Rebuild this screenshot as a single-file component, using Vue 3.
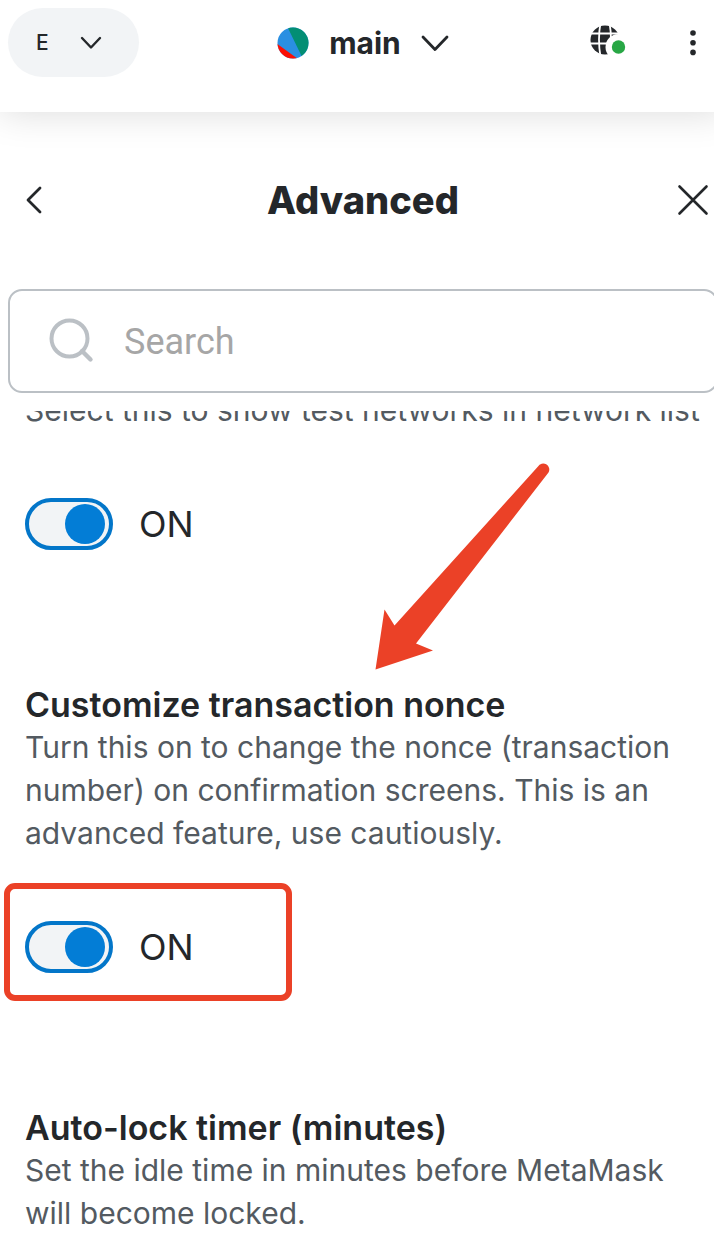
<template>
  <div class="viewport">
    <div class="wallet">
      <header class="app-header">
        <div class="header-side">
          <button class="network-button" type="button" aria-label="Select network">
            <span>E</span>
            <svg width="24" height="24" viewBox="0 0 24 24" fill="none">
              <path d="M3 7L12 16.5L21 7" stroke="#24272a" stroke-width="2.4" stroke-linecap="round" stroke-linejoin="round" />
            </svg>
          </button>
        </div>

        <button class="account-button" type="button">
          <svg class="avatar" width="32" height="32" viewBox="0 0 32 32">
            <clipPath id="avatar-clip"><circle cx="16" cy="16" r="15.5" /></clipPath>
            <g clip-path="url(#avatar-clip)">
              <rect width="32" height="32" fill="#2a8fe2" />
              <path d="M10 -1L26 32H33V-1Z" fill="#038e74" />
              <path d="M-2 15.2L21 32H-2Z" fill="#fb1004" />
            </g>
          </svg>
          <span>main</span>
          <svg width="28" height="28" viewBox="0 0 28 28" fill="none">
            <path d="M2 8L14 20.5L26 8" stroke="#24272a" stroke-width="2.8" stroke-linecap="round" stroke-linejoin="round" />
          </svg>
        </button>

        <div class="header-side header-actions">
          <button class="icon-button" type="button" aria-label="Connected sites">
            <svg width="40" height="40" viewBox="0 0 40 40">
              <circle cx="18" cy="17" r="14.5" fill="#24272a" />
              <path
                d="M2 10.5H34M2 20.5H34M13.5 0Q10.5 16 13.5 34M22.5 0Q25.5 16 22.5 34"
                stroke="#fff"
                stroke-width="1.8"
                fill="none"
              />
              <circle cx="31.5" cy="24" r="13" fill="#fff" />
              <circle cx="31.5" cy="24" r="6.7" fill="#28a745" />
            </svg>
          </button>
          <button class="icon-button" type="button" aria-label="Menu">
            <svg width="24" height="40" viewBox="0 0 24 40" fill="#24272a">
              <circle cx="12" cy="10" r="2.8" />
              <circle cx="12" cy="19.7" r="2.8" />
              <circle cx="12" cy="29.4" r="2.8" />
            </svg>
          </button>
        </div>
      </header>

      <main>
        <div class="title-bar">
          <button class="icon-button" type="button" aria-label="Back">
            <svg width="32" height="32" viewBox="0 0 32 32" fill="none">
              <path d="M23 4L11 16L23 28" stroke="#24272a" stroke-width="2.8" stroke-linecap="round" stroke-linejoin="round" />
            </svg>
          </button>
          <h1>Advanced</h1>
          <button class="icon-button" type="button" aria-label="Close">
            <svg width="32" height="32" viewBox="0 0 32 32" fill="none">
              <path d="M2.500 2.500L29.500 29.500M29.500 2.500L2.500 29.500" stroke="#24272a" stroke-width="2.600" stroke-linecap="round" />
            </svg>
          </button>
        </div>

        <label class="search">
          <svg width="48" height="48" viewBox="0 0 48 48" fill="none" stroke="#bbc0c5">
            <circle cx="22.5" cy="21.5" r="18" stroke-width="4" />
            <path d="M35 34L43.5 42.5" stroke-width="4.4" stroke-linecap="round" />
          </svg>
          <input v-model="query" type="search" placeholder="Search" aria-label="Search settings" />
        </label>

        <div class="settings">
          <section v-for="item in settings" :key="item.id" class="setting">
            <h2 v-if="item.title">{{ item.title }}</h2>
            <p>{{ item.description }}</p>
            <label v-if="item.toggle" class="toggle-row" :class="{ highlighted: item.highlighted }">
              <input v-model="item.on" type="checkbox" role="switch" />
              <span>{{ item.on ? 'ON' : 'OFF' }}</span>
            </label>
          </section>

          <svg class="pointer" width="176" height="210" viewBox="0 0 176 210">
            <path
              d="M163 4.5A6 6 0 0 1 173.5 10.5L41 181.5L58 188.5L0.5 207.5L9.5 147.5L19.5 163.5Z"
              fill="#eb4127"
            />
          </svg>
        </div>
      </main>
    </div>
  </div>
</template>

<script setup>
import { ref } from 'vue'

const query = ref('')

const settings = ref([
  {
    id: 'test-networks',
    description: 'Select this to show test networks in network list',
    toggle: true,
    on: true
  },
  {
    id: 'nonce',
    title: 'Customize transaction nonce',
    description:
      'Turn this on to change the nonce (transaction number) on confirmation screens. This is an advanced feature, use cautiously.',
    toggle: true,
    on: true,
    highlighted: true
  },
  {
    id: 'auto-lock',
    title: 'Auto-lock timer (minutes)',
    description: 'Set the idle time in minutes before MetaMask will become locked.'
  }
])
</script>

<style>
body {
  margin: 0;
  background: #fff;
}
</style>

<style scoped>
.viewport {
  overflow: hidden;
}

/* the panel runs slightly past the right edge of the window */
.wallet {
  width: calc(100% + 12px);
  font-family: Inter, 'Liberation Sans', sans-serif;
  color: #24272a;
}

button {
  display: flex;
  align-items: center;
  padding: 0;
  border: none;
  background: none;
  color: inherit;
  font-family: inherit;
  cursor: pointer;
}

.app-header {
  display: grid;
  grid-template-columns: 1fr auto 1fr;
  align-items: center;
  padding: 8px 8px 35px;
  box-shadow: 0 0 36px rgba(0, 0, 0, 0.15);
}

.header-side {
  display: flex;
  align-items: center;
}

.header-actions {
  justify-content: flex-end;
  gap: 54px;
  padding-right: 13px;
}

.network-button {
  gap: 30px;
  height: 69px;
  padding: 0 36px 0 28px;
  border-radius: 35px;
  background: #f2f4f6;
  font-size: 21px;
  font-weight: 500;
}

.account-button {
  gap: 20px;
  font-size: 30px;
  font-weight: 700;
}

.title-bar {
  display: flex;
  align-items: center;
  justify-content: space-between;
  padding: 64px 17px 65px;
}

h1 {
  margin: 0;
  font-size: 38px;
  line-height: 48px;
  font-weight: 800;
}

.search {
  display: flex;
  align-items: center;
  gap: 29px;
  height: 100px;
  margin: 0 8px;
  padding: 0 37px;
  border: 2px solid #bbc0c5;
  border-radius: 14px;
}

.search input {
  flex: 1;
  min-width: 0;
  padding: 2px 0 0;
  border: none;
  outline: none;
  background: none;
  font-family: Roboto, sans-serif;
  font-size: 36px;
  color: #24272a;
}

.search input::placeholder {
  color: #a6a6a6;
  opacity: 1;
}

/* scrolled list: its first line is half hidden under the search box */
.settings {
  position: relative;
  margin-top: 18px;
  padding: 0 25px;
  overflow: hidden;
}

.setting + .setting {
  margin-top: 133px;
}

.setting:first-child {
  margin-top: -22px;
}

h2 {
  margin: 0;
  font-size: 34px;
  line-height: 43px;
  font-weight: 600;
}

p {
  margin: 0;
  font-size: 30px;
  line-height: 43px;
  color: #535a61;
}

.toggle-row {
  position: relative;
  display: flex;
  align-items: center;
  gap: 26px;
  width: fit-content;
  margin-top: 66px;
  font-size: 36px;
  line-height: 52px;
  cursor: pointer;
}

.toggle-row input {
  display: flex;
  align-items: center;
  box-sizing: border-box;
  appearance: none;
  width: 88px;
  height: 52px;
  margin: 0;
  padding: 0 4px;
  border: 4px solid #0376c9;
  border-radius: 26px;
  background: #f2f4f6;
}

.toggle-row input::before {
  content: '';
  width: 40px;
  height: 40px;
  border-radius: 50%;
  background: #6a737d;
}

.toggle-row input:checked {
  justify-content: flex-end;
}

.toggle-row input:checked::before {
  background: #037dd6;
}

.highlighted::after {
  content: '';
  position: absolute;
  top: -38px;
  left: -21px;
  box-sizing: border-box;
  width: 288px;
  height: 118px;
  border: 6px solid #eb4127;
  border-radius: 11px;
  pointer-events: none;
}

.pointer {
  position: absolute;
  top: 51px;
  left: 375px;
  pointer-events: none;
}
</style>
